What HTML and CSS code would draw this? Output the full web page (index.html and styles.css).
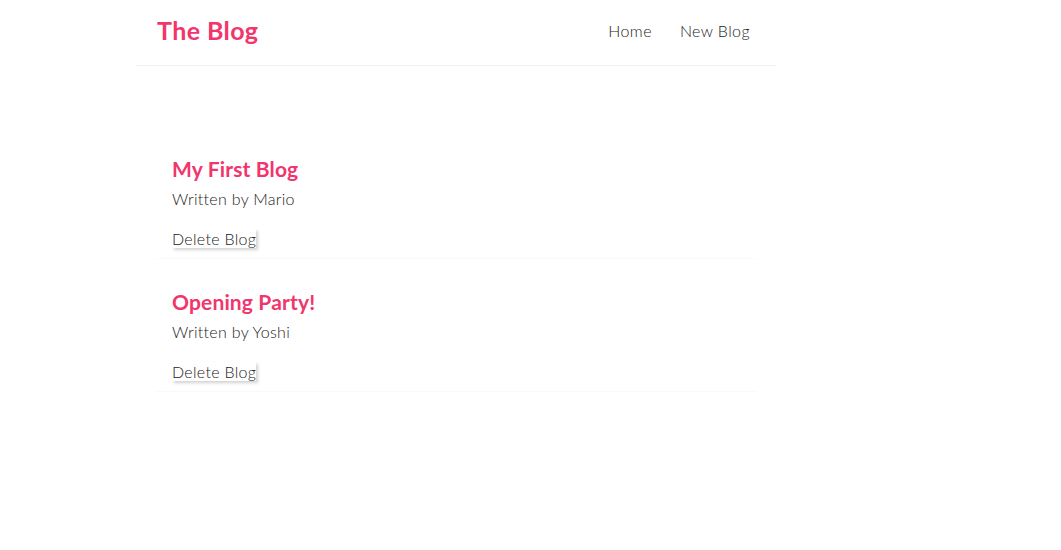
FILE: index.html
```html
<!DOCTYPE html>
<html lang="en">
<head>
<meta charset="utf-8">
<title>The Blog</title>
<link rel="stylesheet" href="styles.css">
</head>
<body>
<div class="app">
  <nav class="navbar">
    <h1 class="brand">The Blog</h1>
    <div class="links">
      <a href="#" class="link">Home</a>
      <a href="#" class="link">New Blog</a>
    </div>
  </nav>
  <main class="content">
    <div class="blog-preview">
      <h2 class="blog-title">My First Blog</h2>
      <p class="blog-author">Written by Mario</p>
      <button class="delete-btn">Delete Blog</button>
    </div>
    <div class="blog-preview">
      <h2 class="blog-title">Opening Party!</h2>
      <p class="blog-author">Written by Yoshi</p>
      <button class="delete-btn">Delete Blog</button>
    </div>
  </main>
</div>
</body>
</html>
```
FILE: styles.css
```css
* {
  margin: 0;
  box-sizing: content-box;
  font-family: "Lato", "Open Sans", sans-serif;
  color: #222;
}
html, body {
  background: #fff;
}
.app {
  width: 912px;
}
.navbar {
  padding: 18px 20px 22px;
  display: flex;
  align-items: center;
  max-width: 600px;
  height: 25px;
  margin: 0 auto;
  border-bottom: 1px solid #f2f2f2;
}
.brand {
  color: #f1356d;
  font-size: 25px;
  letter-spacing: 0.4px;
  font-weight: 700;
  line-height: 25px;
  padding-left: 1px;
}
.links {
  margin-left: auto;
  display: flex;
}
.link {
  margin-left: 16px;
  padding: 6px;
  text-decoration: none;
  font-size: 16px;
  font-weight: 300;
  letter-spacing: 0.4px;
  line-height: 20px;
}
.content {
  max-width: 600px;
  margin: 40px auto;
  padding: 20px;
}
.blog-preview {
  padding: 10px 16px;
  margin: 20px 0;
  border-bottom: 1px solid #fafafa;
  display: flex;
  flex-direction: column;
  align-items: flex-start;
}
.blog-title {
  font-size: 21px;
  letter-spacing: 0.15px;
  line-height: 25px;
  font-weight: 700;
  color: #f1356d;
  margin-bottom: 8px;
}
.blog-author {
  font-size: 16px;
  font-weight: 300;
  letter-spacing: 0.3px;
  line-height: 20px;
}
.delete-btn {
  margin-top: 20px;
  padding: 0;
  border: none;
  background: #fff;
  font-size: 16px;
  font-weight: 300;
  letter-spacing: 0.3px;
  line-height: 19px;
  box-shadow: 2px 2px 3px rgba(0, 0, 0, 0.18);
  cursor: pointer;
}
```
